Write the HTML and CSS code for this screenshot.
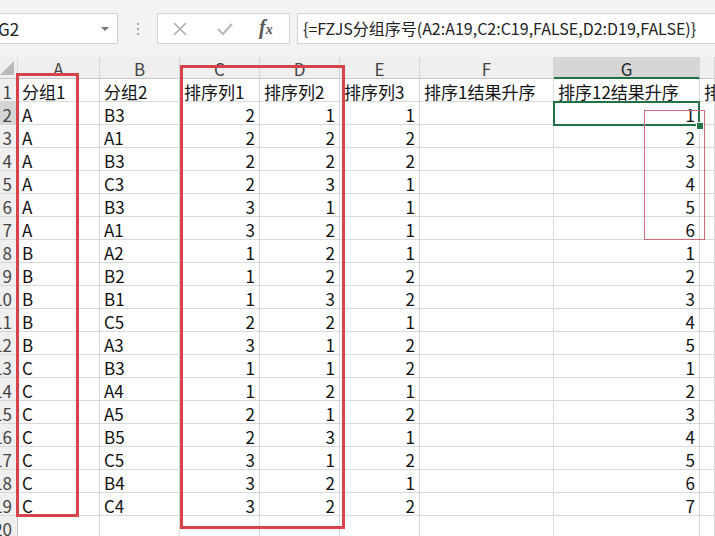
FILE: index.html
```html
<!DOCTYPE html>
<html lang="zh">
<head>
<meta charset="utf-8">
<title>Excel</title>
<link rel="stylesheet" href="styles.css">
</head>
<body>
<div class="app">
  <div class="toolbar">
    <div class="namebox"><span class="name">G2</span><span class="dd"></span></div>
    <div class="sep"><i></i><i></i><i></i></div>
    <div class="btns">
      <svg class="ico" width="16" height="16" viewBox="0 0 16 16"><path d="M2 2 L14 14 M14 2 L2 14" stroke="#a6a6a6" stroke-width="1.4" fill="none"/></svg>
      <svg class="ico" width="18" height="16" viewBox="0 0 18 16"><path d="M2 8 L7 13 L16 3" stroke="#b8b8b8" stroke-width="2" fill="none"/></svg>
      <span class="fx">f<span class="fxx">x</span></span>
    </div>
    <div class="formula">{=FZJS分组序号(A2:A19,C2:C19,FALSE,D2:D19,FALSE)}</div>
  </div>
  <div class="sheet">
    <div class="grid">
      <div class="corner"><span class="tri"></span></div>
      <div class="ch">A</div><div class="ch">B</div><div class="ch">C</div><div class="ch">D</div><div class="ch">E</div><div class="ch">F</div><div class="ch on">G</div><div class="ch"></div>

      <div class="rh">1</div><div class="c">分组1</div><div class="c">分组2</div><div class="c">排序列1</div><div class="c">排序列2</div><div class="c">排序列3</div><div class="c">排序1结果升序</div><div class="c">排序12结果升序</div><div class="c">排</div>
      <div class="rh on">2</div><div class="c">A</div><div class="c">B3</div><div class="n">2</div><div class="n">1</div><div class="n">1</div><div class="n"></div><div class="n">1</div><div class="c"></div>
      <div class="rh">3</div><div class="c">A</div><div class="c">A1</div><div class="n">2</div><div class="n">2</div><div class="n">2</div><div class="n"></div><div class="n">2</div><div class="c"></div>
      <div class="rh">4</div><div class="c">A</div><div class="c">B3</div><div class="n">2</div><div class="n">2</div><div class="n">2</div><div class="n"></div><div class="n">3</div><div class="c"></div>
      <div class="rh">5</div><div class="c">A</div><div class="c">C3</div><div class="n">2</div><div class="n">3</div><div class="n">1</div><div class="n"></div><div class="n">4</div><div class="c"></div>
      <div class="rh">6</div><div class="c">A</div><div class="c">B3</div><div class="n">3</div><div class="n">1</div><div class="n">1</div><div class="n"></div><div class="n">5</div><div class="c"></div>
      <div class="rh">7</div><div class="c">A</div><div class="c">A1</div><div class="n">3</div><div class="n">2</div><div class="n">1</div><div class="n"></div><div class="n">6</div><div class="c"></div>
      <div class="rh">8</div><div class="c">B</div><div class="c">A2</div><div class="n">1</div><div class="n">2</div><div class="n">1</div><div class="n"></div><div class="n">1</div><div class="c"></div>
      <div class="rh">9</div><div class="c">B</div><div class="c">B2</div><div class="n">1</div><div class="n">2</div><div class="n">2</div><div class="n"></div><div class="n">2</div><div class="c"></div>
      <div class="rh">10</div><div class="c">B</div><div class="c">B1</div><div class="n">1</div><div class="n">3</div><div class="n">2</div><div class="n"></div><div class="n">3</div><div class="c"></div>
      <div class="rh">11</div><div class="c">B</div><div class="c">C5</div><div class="n">2</div><div class="n">2</div><div class="n">1</div><div class="n"></div><div class="n">4</div><div class="c"></div>
      <div class="rh">12</div><div class="c">B</div><div class="c">A3</div><div class="n">3</div><div class="n">1</div><div class="n">2</div><div class="n"></div><div class="n">5</div><div class="c"></div>
      <div class="rh">13</div><div class="c">C</div><div class="c">B3</div><div class="n">1</div><div class="n">1</div><div class="n">2</div><div class="n"></div><div class="n">1</div><div class="c"></div>
      <div class="rh">14</div><div class="c">C</div><div class="c">A4</div><div class="n">1</div><div class="n">2</div><div class="n">1</div><div class="n"></div><div class="n">2</div><div class="c"></div>
      <div class="rh">15</div><div class="c">C</div><div class="c">A5</div><div class="n">2</div><div class="n">1</div><div class="n">2</div><div class="n"></div><div class="n">3</div><div class="c"></div>
      <div class="rh">16</div><div class="c">C</div><div class="c">B5</div><div class="n">2</div><div class="n">3</div><div class="n">1</div><div class="n"></div><div class="n">4</div><div class="c"></div>
      <div class="rh">17</div><div class="c">C</div><div class="c">C5</div><div class="n">3</div><div class="n">1</div><div class="n">2</div><div class="n"></div><div class="n">5</div><div class="c"></div>
      <div class="rh">18</div><div class="c">C</div><div class="c">B4</div><div class="n">3</div><div class="n">2</div><div class="n">1</div><div class="n"></div><div class="n">6</div><div class="c"></div>
      <div class="rh">19</div><div class="c">C</div><div class="c">C4</div><div class="n">3</div><div class="n">2</div><div class="n">2</div><div class="n"></div><div class="n">7</div><div class="c"></div>
      <div class="rh">20</div><div class="c"></div><div class="c"></div><div class="c"></div><div class="c"></div><div class="c"></div><div class="c"></div><div class="c"></div><div class="c"></div>
    </div>
    <div class="redbox box-a"></div>
    <div class="redbox box-cd"></div>
    <div class="selbox"></div>
    <div class="handle"></div>
    <div class="pinkbox"></div>
  </div>
</div>
</body>
</html>
```
FILE: styles.css
```css
html, body {
  margin: 0;
  padding: 0;
  overflow: hidden;
  background: #ffffff;
}
body {
  width: 715px;
  height: 536px;
  font-family: "Noto Sans CJK SC", "Noto Sans", sans-serif;
  color: #111;
}
.app {
  width: 715px;
  height: 536px;
  overflow: hidden;
}
.toolbar {
  height: 57px;
  box-sizing: border-box;
  background: #f3f3f3;
  padding-top: 13px;
  display: flex;
  align-items: flex-start;
}
.namebox {
  margin-left: -10px;
  width: 128px;
  height: 31px;
  box-sizing: border-box;
  background: #fff;
  border: 1px solid #d2d2d2;
  display: flex;
  align-items: center;
  padding-left: 7px;
  position: relative;
}
.name {
  font-size: 17px;
  color: #222;
  line-height: 29px;
}
.dd {
  position: absolute;
  right: 8px;
  top: 13px;
  width: 0;
  height: 0;
  border-left: 4px solid transparent;
  border-right: 4px solid transparent;
  border-top: 4px solid #777;
}
.sep {
  width: 39px;
  height: 31px;
  display: flex;
  flex-direction: column;
  align-items: center;
  justify-content: center;
  gap: 3px;
}
.sep i {
  display: block;
  width: 2px;
  height: 2px;
  background: #a8a8a8;
}
.btns {
  width: 133px;
  height: 31px;
  box-sizing: border-box;
  background: #fff;
  border: 1px solid #d2d2d2;
  display: flex;
  align-items: center;
  padding-left: 14px;
  gap: 28px;
}
.fx {
  font-family: "Liberation Serif", serif;
  font-style: italic;
  font-weight: bold;
  font-size: 20px;
  color: #555;
  line-height: 20px;
  margin-left: -3px;
}
.fxx {
  font-size: 14px;
}
.formula {
  margin-left: 7px;
  flex: 1;
  height: 31px;
  box-sizing: border-box;
  background: #fff;
  border: 1px solid #d2d2d2;
  border-right: none;
  padding-left: 5px;
  font-size: 16px;
  line-height: 29px;
  color: #222;
  white-space: nowrap;
  overflow: hidden;
}
.sheet {
  position: relative;
}
.grid {
  display: grid;
  grid-template-columns: 18px 82px 80px 80px 80px 80px 134px 146px 15px;
  grid-template-rows: 22px repeat(20, 23px);
  font-size: 17px;
}
.grid > div {
  box-sizing: border-box;
  border-right: 1px solid #d9d9d9;
  border-bottom: 1px solid #d9d9d9;
  white-space: nowrap;
  overflow: visible;
}
.corner {
  background: #efefef;
  position: relative;
  border-bottom-color: #c6c6c6 !important;
}
.tri {
  position: absolute;
  right: 3px;
  bottom: 3px;
  width: 0;
  height: 0;
  border-left: 14px solid transparent;
  border-bottom: 14px solid #b9b9b9;
}
.ch {
  background: #efefef;
  text-align: center;
  color: #444;
  line-height: 22px;
  padding-top: 1px;
  border-bottom-color: #c6c6c6 !important;
  border-right-color: #d6d6d6 !important;
}
.ch.on {
  background: #d6d6d6;
  border-bottom: 2px solid #217346 !important;
  color: #262626;
}
.rh {
  background: #efefef;
  color: #444;
  display: flex;
  justify-content: flex-end;
  padding-right: 5px;
  line-height: 21px;
  padding-top: 2px;
  overflow: hidden !important;
  border-right-color: #c6c6c6 !important;
  border-bottom-color: #d6d6d6 !important;
}
.rh.on {
  background: #d6d6d6;
  border-right: 2px solid #217346 !important;
  padding-right: 4px;
}
.c {
  padding-left: 4px;
  line-height: 21px;
  padding-top: 2px;
}
.n {
  text-align: right;
  padding-right: 4px;
  line-height: 21px;
  padding-top: 2px;
}
.redbox {
  position: absolute;
  border: 3px solid #d6434b;
  box-sizing: border-box;
}
.box-a {
  left: 16px;
  top: 16px;
  width: 63px;
  height: 444px;
}
.box-cd {
  left: 180px;
  top: 8px;
  width: 165px;
  height: 464px;
}
.selbox {
  position: absolute;
  left: 553px;
  top: 44px;
  width: 147px;
  height: 25px;
  box-sizing: border-box;
  border: 2px solid #217346;
}
.handle {
  position: absolute;
  left: 696px;
  top: 65px;
  width: 6px;
  height: 6px;
  background: #217346;
  border: 1px solid #fff;
}
.pinkbox {
  position: absolute;
  left: 644px;
  top: 53px;
  width: 61px;
  height: 130px;
  box-sizing: border-box;
  border: 1px solid #cf6b7a;
}
```
